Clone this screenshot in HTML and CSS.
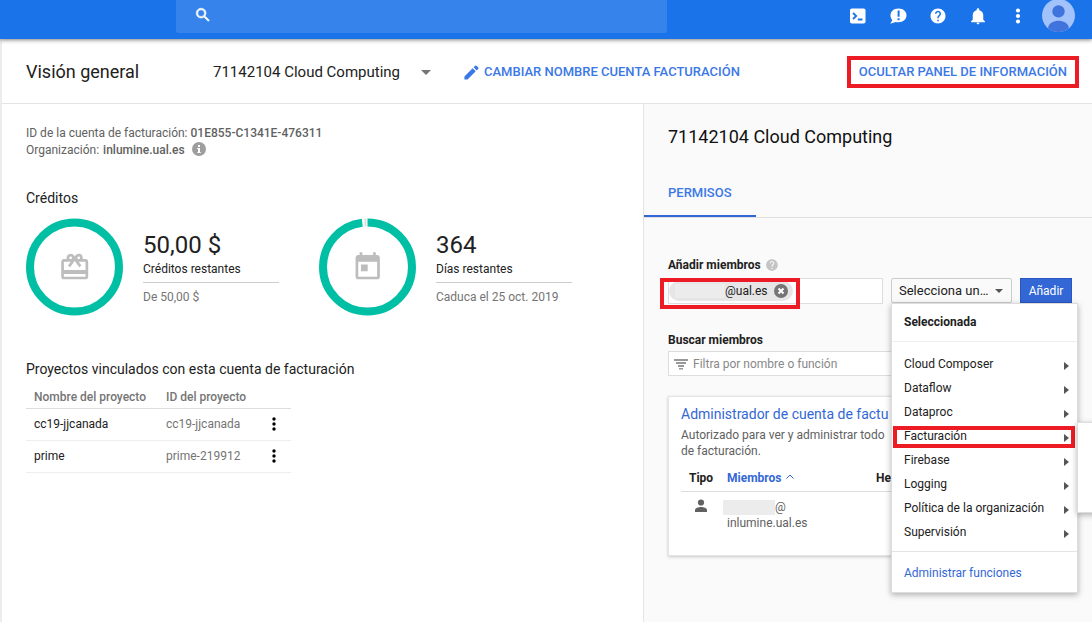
FILE: index.html
```html
<!DOCTYPE html>
<html lang="es">
<head>
<meta charset="utf-8">
<meta name="viewport" content="width=device-width, initial-scale=1">
<title>Visión general</title>
<link rel="stylesheet" href="styles.css">
</head>
<body>
<header class="topbar">
  <label class="search">
    <svg class="search-icon" viewBox="0 0 24 24" aria-hidden="true"><path d="M15.5 14h-.79l-.28-.27A6.5 6.5 0 1 0 13.73 14.43l.27.28v.79l5 4.99L20.49 19zM9.5 14a4.5 4.5 0 1 1 0-9 4.5 4.5 0 0 1 0 9z" stroke="#fff" stroke-width=".8"/></svg>
    <input class="search-input" type="search" aria-label="Buscar">
  </label>
  <nav class="tools">
    <button class="tool" aria-label="Cloud Shell"><svg viewBox="0 0 18 18"><rect x="1" y="1.500" width="15.500" height="15" rx="1.800" fill="#fff"/><path d="M4 6l3.200 3L4 12M8.800 12.500h4.700" fill="none" stroke="#1a73e8" stroke-width="1.800"/></svg></button>
    <button class="tool" aria-label="Comentarios"><svg viewBox="0 0 18 18"><path d="M9.500 1.500C4.800 1.500 1.500 4.400 1.500 8.300c0 2 .7 3.700 1.900 4.900L1.200 16.800l5.600-1.900c.9.300 1.700.4 2.700.4 4.700 0 8-3 8-7s-3.300-6.800-8-6.800z" fill="#fff"/><path d="M8.600 3.500h2v6.200h-2zM8.600 11.200h2v2.100h-2z" fill="#1a73e8"/></svg></button>
    <button class="tool" aria-label="Ayuda"><svg viewBox="0 0 24 24"><path fill="#fff" d="M12 2C6.480 2 2 6.480 2 12s4.480 10 10 10 10-4.480 10-10S17.520 2 12 2zm1 17h-2v-2h2v2zm2.070-7.750l-.9.920C13.450 12.900 13 13.500 13 15h-2v-.5c0-1.100.45-2.100 1.170-2.830l1.240-1.260c.37-.36.59-.86.59-1.410 0-1.100-.9-2-2-2s-2 .9-2 2H8c0-2.210 1.790-4 4-4s4 1.790 4 4c0 .88-.36 1.680-.93 2.250z"/></svg></button>
    <button class="tool" aria-label="Notificaciones"><svg viewBox="0 0 24 24"><path fill="#fff" d="M12 23c1.100 0 2-.9 2-2h-4c0 1.100.9 2 2 2zm7-6v-6c0-3.300-1.900-6-5.200-6.700V3.500a1.800 1.800 0 0 0-3.600 0v.8C6.900 5 5 7.700 5 11v6l-2.200 2v1.200h18.400V19z"/></svg></button>
    <button class="tool" aria-label="Más opciones"><svg viewBox="0 0 18 18" fill="#fff"><circle cx="9" cy="3.500" r="2.100"/><circle cx="9" cy="9" r="2.100"/><circle cx="9" cy="14.500" r="2.100"/></svg></button>
    <button class="avatar" aria-label="Cuenta"><svg viewBox="0 0 32 32"><defs><clipPath id="round"><circle cx="16" cy="16" r="16"/></clipPath></defs><g clip-path="url(#round)"><rect width="32" height="32" fill="#a1c2fa"/><circle cx="16" cy="12" r="6" fill="#4173dc"/><path d="M6 32v-4c0-5 6-7 10-7s10 2 10 7v4z" fill="#4173dc"/></g></svg></button>
  </nav>
</header>

<div class="page">
  <div class="titlebar">
    <h1 class="page-title">Visión general</h1>
    <span class="picker account">
      <select class="account-select" aria-label="Cuenta de facturación"><option>71142104 Cloud Computing</option></select>
      <svg class="caret" viewBox="0 0 10 5" aria-hidden="true"><path d="M0 0h10L5 5z"/></svg>
    </span>
    <button class="link-button">
      <svg class="pencil" viewBox="0 0 18 18" aria-hidden="true"><path d="M1.500 13.200v3.300h3.300l8.700-8.700-3.300-3.300zM16.200 5.100c.4-.4.4-.9 0-1.300l-2-2c-.4-.4-.9-.4-1.300 0l-1.700 1.700 3.300 3.300z"/></svg>
      CAMBIAR NOMBRE CUENTA FACTURACIÓN
    </button>
    <button class="link-button panel-toggle">OCULTAR PANEL DE INFORMACIÓN</button>
  </div>

  <div class="columns">
    <main class="overview">
      <div class="meta">
        <p>ID de la cuenta de facturación: <b>01E855-C1341E-476311</b></p>
        <p class="meta-org">Organización: <b>inlumine.ual.es</b>
          <svg class="info" viewBox="0 0 14 14" aria-label="Información"><circle cx="7" cy="7" r="7" fill="#9e9e9e"/><path d="M6 3h2v2H6zM5.200 6H8v4h.8v1H5.200v-1H6V7h-.8z" fill="#fff"/></svg>
        </p>
      </div>

      <section class="credits">
        <h2>Créditos</h2>
        <div class="gauges">
          <div class="gauge">
            <svg class="dial" viewBox="0 0 98 98" aria-hidden="true">
              <circle cx="48.500" cy="49" r="44.500" fill="none" stroke="#00bfa5" stroke-width="8"/>
              <g transform="translate(32.500 33) scale(1.350)" fill="#bdbdbd"><path d="M20 6h-2.180c.11-.31.180-.65.180-1a2.996 2.996 0 0 0-5.500-1.650l-.5.670-.5-.68C10.960 2.540 10.050 2 9 2 7.340 2 6 3.340 6 5c0 .35.070.69.180 1H4c-1.110 0-1.990.89-1.990 2L2 19c0 1.110.89 2 2 2h16c1.110 0 2-.89 2-2V8c0-1.110-.89-2-2-2zm-5-2c.55 0 1 .45 1 1s-.45 1-1 1-1-.45-1-1 .45-1 1-1zM9 4c.55 0 1 .45 1 1s-.45 1-1 1-1-.45-1-1 .45-1 1-1zm11 15H4v-2h16v2zm0-5H4V8h5.080L7 10.830 8.620 12 11 8.760l1-1.360 1 1.360L15.380 12 17 10.830 14.920 8H20v6z"/></g>
            </svg>
            <div class="figures">
              <p class="figure">50,00 $</p>
              <p class="figure-name">Créditos restantes</p>
              <p class="figure-note">De 50,00 $</p>
            </div>
          </div>
          <div class="gauge">
            <svg class="dial" viewBox="0 0 98 98" aria-hidden="true">
              <circle cx="48.500" cy="49" r="44.500" fill="none" stroke="#00bfa5" stroke-width="8" pathLength="100" stroke-dasharray="98.100 1.900" transform="rotate(-90 48.500 49)"/>
              <path d="M45.200 .6h2l.2 8h-1.700z" fill="#ddd"/>
              <g transform="translate(32.500 33) scale(1.350)" fill="#bdbdbd"><path d="M19 3h-1V1h-2v2H8V1H6v2H5c-1.110 0-1.990.9-1.990 2L3 19c0 1.100.89 2 2 2h14c1.100 0 2-.9 2-2V5c0-1.100-.9-2-2-2zm0 16H5V8h14v11zM7 10h5v5H7z"/></g>
            </svg>
            <div class="figures">
              <p class="figure">364</p>
              <p class="figure-name">Días restantes</p>
              <p class="figure-note">Caduca el 25 oct. 2019</p>
            </div>
          </div>
        </div>
      </section>

      <section class="projects">
        <h2>Proyectos vinculados con esta cuenta de facturación</h2>
        <table class="project-table">
          <thead><tr><th class="col-name">Nombre del proyecto</th><th class="col-id">ID del proyecto</th><th class="col-menu"></th></tr></thead>
          <tbody>
            <tr><td>cc19-jjcanada</td><td class="muted">cc19-jjcanada</td><td><button class="more" aria-label="Opciones de cc19-jjcanada"><svg viewBox="0 0 4 14"><circle cx="2" cy="2" r="1.700"/><circle cx="2" cy="7" r="1.700"/><circle cx="2" cy="12" r="1.700"/></svg></button></td></tr>
            <tr><td>prime</td><td class="muted">prime-219912</td><td><button class="more" aria-label="Opciones de prime"><svg viewBox="0 0 4 14"><circle cx="2" cy="2" r="1.700"/><circle cx="2" cy="7" r="1.700"/><circle cx="2" cy="12" r="1.700"/></svg></button></td></tr>
          </tbody>
        </table>
      </section>
    </main>

    <aside class="panel">
      <h2 class="panel-title">71142104 Cloud Computing</h2>
      <div class="tabs"><button class="tab">PERMISOS</button></div>

      <div class="panel-body">
        <label class="field-label" for="members">Añadir miembros
          <svg class="help" viewBox="0 0 24 24" aria-hidden="true"><path d="M12 2C6.480 2 2 6.480 2 12s4.480 10 10 10 10-4.480 10-10S17.520 2 12 2zm1 17h-2v-2h2v2zm2.070-7.750l-.9.920C13.450 12.900 13 13.500 13 15h-2v-.5c0-1.100.45-2.100 1.170-2.830l1.240-1.260c.37-.36.59-.86.59-1.410 0-1.100-.9-2-2-2s-2 .9-2 2H8c0-2.210 1.790-4 4-4s4 1.790 4 4c0 .88-.36 1.680-.93 2.250z"/></svg>
        </label>
        <div class="add-row">
          <div class="member-box">
            <span class="chip"><span class="redacted chip-name"></span><span>@ual.es</span>
              <button class="chip-remove" aria-label="Quitar"><svg viewBox="0 0 14 14"><circle cx="7" cy="7" r="7" fill="#757575"/><path d="M4.500 4.500l5 5m0-5l-5 5" stroke="#fff" stroke-width="2"/></svg></button>
            </span>
            <input class="member-input" id="members" type="text">
            <span class="member-mark"></span>
          </div>
          <div class="role">
            <span class="picker role-picker">
              <select class="role-select" aria-label="Función"><option>Selecciona un…</option></select>
              <svg class="role-caret" viewBox="0 0 8 4" aria-hidden="true"><path d="M0 0h8L4 4z"/></svg>
            </span>
            <div class="menu">
              <p class="menu-heading">Seleccionada</p>
              <div class="menu-list">
                <button class="menu-item">Cloud Composer<svg viewBox="0 0 5 8"><path d="M0 0l5 4-5 4z"/></svg></button>
                <button class="menu-item">Dataflow<svg viewBox="0 0 5 8"><path d="M0 0l5 4-5 4z"/></svg></button>
                <button class="menu-item">Dataproc<svg viewBox="0 0 5 8"><path d="M0 0l5 4-5 4z"/></svg></button>
                <button class="menu-item marked">Facturación<svg viewBox="0 0 5 8"><path d="M0 0l5 4-5 4z"/></svg></button>
                <button class="menu-item">Firebase<svg viewBox="0 0 5 8"><path d="M0 0l5 4-5 4z"/></svg></button>
                <button class="menu-item">Logging<svg viewBox="0 0 5 8"><path d="M0 0l5 4-5 4z"/></svg></button>
                <button class="menu-item">Política de la organización<svg viewBox="0 0 5 8"><path d="M0 0l5 4-5 4z"/></svg></button>
                <button class="menu-item">Supervisión<svg viewBox="0 0 5 8"><path d="M0 0l5 4-5 4z"/></svg></button>
              </div>
              <a class="menu-link" href="#">Administrar funciones</a>
              <div class="submenu"></div>
            </div>
          </div>
          <button class="add-button">Añadir</button>
        </div>

        <label class="field-label search-label" for="filter">Buscar miembros</label>
        <div class="filter">
          <svg class="filter-icon" viewBox="0 0 16 12" aria-hidden="true"><path d="M1 1h14v2H1zM3 4h10v2H3zM5 7h6v2H5zM6 10h4v1.500H6z"/></svg>
          <input class="filter-input" id="filter" type="text" placeholder="Filtra por nombre o función">
        </div>

        <article class="card">
          <h3 class="card-title">Administrador de cuenta de factu</h3>
          <p class="card-text">Autorizado para ver y administrar todo<br>de facturación.</p>
          <table class="member-table">
            <thead><tr><th class="col-type">Tipo</th><th class="sorted">Miembros <svg class="sort" viewBox="0 0 8 5" aria-hidden="true"><path d="M.5 4.500L4 1l3.500 3.500" fill="none" stroke="#3367d6"/></svg></th><th class="col-inherited">Her</th></tr></thead>
            <tbody><tr>
              <td class="person"><svg viewBox="0 0 14 14"><circle cx="7" cy="3.500" r="3.100"/><path d="M1 13v-2c0-2 3.500-3 6-3s6 1 6 3v2z"/></svg></td>
              <td class="member"><span class="redacted member-name"></span>@<br>inlumine.ual.es</td>
              <td></td>
            </tr></tbody>
          </table>
        </article>
      </div>
    </aside>
  </div>
</div>
</body>
</html>
```
FILE: styles.css
```css
* { box-sizing: border-box; }

body {
  display: flex;
  flex-direction: column;
  min-height: 100vh;
  margin: 0;
  overflow: hidden;
  background: #fff;
  color: #212121;
  font-family: Roboto, "Liberation Sans", sans-serif;
  font-size: 12px;
  line-height: 16px;
}

h1, h2, h3, p { margin: 0; font-weight: 400; }
b { font-weight: 500; }
svg { display: block; flex: none; }

button, input, select {
  margin: 0;
  padding: 0;
  border: 0;
  background: none;
  color: inherit;
  font: inherit;
  outline: 0;
}

select { appearance: none; }

/* Top bar */
.topbar {
  display: flex;
  justify-content: space-between;
  height: 39px;
  padding: 0 17px 0 176px;
  background: #1a73e8;
  box-shadow: 0 1px 4px rgba(0, 0, 0, .5);
  z-index: 2;
}

.search {
  display: flex;
  flex: 0 1 491px;
  align-items: center;
  height: 33px;
  padding: 0 18px 4px;
  border-radius: 0 0 2px 2px;
  background: #3583eb;
}

.search-icon { width: 18px; height: 18px; fill: #fff; }
.search-input { flex: 1; min-width: 0; color: #fff; }

.tools {
  display: flex;
  align-items: center;
  gap: 22px;
  height: 31px;
}

.tool svg { width: 18px; height: 18px; }
.avatar svg { width: 33px; height: 33px; }
.avatar { margin-left: -7px; }

/* Title bar */
.page {
  display: flex;
  flex: 1;
  flex-direction: column;
  border-left: 2px solid #ececec;
}

.titlebar {
  display: flex;
  align-items: center;
  height: 65px;
  padding: 2px 13px 0 24px;
  border-bottom: 1px solid #e4e4e4;
}

.page-title { width: 187px; font-size: 18px; line-height: 24px; }

.picker { position: relative; display: flex; align-items: center; }
.account { gap: 20px; font-size: 15px; line-height: 24px; }
.caret { width: 10px; height: 5px; fill: #757575; }

.link-button {
  display: flex;
  align-items: center;
  gap: 4px;
  color: #3b78e7;
  font-size: 13px;
  font-weight: 500;
  line-height: 16px;
}

.account + .link-button { margin-left: 32px; }
.pencil { width: 17px; height: 17px; fill: #3b78e7; }

.panel-toggle {
  margin-left: auto;
  padding: 4px 8px;
  border: 4px solid #ed1c24;
}

/* Columns */
.columns {
  display: grid;
  flex: 1;
  grid-template-columns: minmax(0, 1fr) minmax(0, 449px);
}

.overview { padding: 21px 24px; }
.overview h2 { font-size: 14px; line-height: 20px; }

.meta { color: #616161; line-height: 17px; }
.meta-org { display: flex; gap: 4px; }
.info { width: 14px; height: 14px; margin-left: 3px; }

.credits { margin-top: 29px; }
.gauges { display: flex; gap: 40px; margin-top: 10px; }
.gauge { display: flex; gap: 19px; }
.dial { width: 98px; height: 98px; }
.figures { width: 136px; padding-top: 11px; }
.figure { font-size: 24px; line-height: 32px; }
.figure-name { padding-bottom: 5px; border-bottom: 1px solid #ccc; }
.figure-note { padding-top: 6px; color: #757575; }

.projects { margin-top: 43px; }

.project-table {
  width: 265px;
  border-collapse: collapse;
  table-layout: fixed;
}

.project-table th {
  height: 29px;
  padding: 8px 0 0 8px;
  border-bottom: 1px solid #ddd;
  color: #757575;
  font-size: 12px;
  font-weight: 500;
  text-align: left;
}

.project-table td { height: 32px; padding: 0 0 0 8px; border-bottom: 1px solid #eee; }
.project-table .muted { color: #757575; }
.col-name { width: 132px; }
.col-menu { width: 27px; }
.more { display: block; }
.more svg { width: 4px; height: 14px; }

/* Information panel */
.panel {
  position: relative;
  overflow: hidden;
  border-left: 1px solid #e4e4e4;
  background: #fafafa;
}

.panel-title { padding: 21px 24px 0; color: #111; font-size: 18px; line-height: 24px; }
.tabs { margin-top: 19px; border-bottom: 1px solid #e0e0e0; }

.tab {
  display: block;
  height: 49px;
  padding: 2px 24px 0;
  border-bottom: 2px solid #3367d6;
  color: #3b78e7;
  font-size: 13px;
  font-weight: 500;
}

.panel-body { padding: 39px 20px 0 24px; }

.field-label {
  display: flex;
  align-items: center;
  gap: 4px;
  font-weight: 700;
}

.help { width: 14px; height: 14px; fill: #c4c4c4; }
.add-row { display: flex; gap: 8px; height: 26px; margin-top: 5px; }

.member-box {
  position: relative;
  display: flex;
  flex: 1;
  min-width: 0;
  border: 1px solid #ddd;
  background: #fff;
}

.member-input { flex: 1; min-width: 0; }

.chip {
  display: flex;
  align-items: center;
  height: 20px;
  margin: 2px 0;
  padding: 0 5px 0 6px;
  border-radius: 10px;
  background: #e6e6e6;
}

.redacted { display: inline-block; background: #ececec; }
.chip-name { width: 50px; height: 14px; }
.chip-remove { margin-left: 6px; }
.chip-remove svg { width: 14px; height: 14px; }

.member-mark {
  position: absolute;
  top: -1px;
  left: -9px;
  width: 140px;
  height: 31px;
  border: 4px solid #ed1c24;
  pointer-events: none;
}

.role { position: relative; width: 121px; }

.role-select {
  width: 100%;
  height: 25px;
  padding-left: 7px;
  border: 1px solid #ccc;
  border-radius: 2px;
  background: #fafafa;
  font-size: 13px;
}

.role-caret { position: absolute; right: 9px; width: 8px; height: 4px; fill: #555; }

.add-button {
  width: 52px;
  height: 25px;
  border: 1px solid #2a56c6;
  background: #3367d6;
  color: #fff;
}

/* Role menu */
.menu {
  position: absolute;
  top: 25px;
  left: 0;
  z-index: 1;
  width: 187px;
  border: 1px solid #ddd;
  background: #fff;
  box-shadow: 0 2px 6px rgba(0, 0, 0, .3);
}

.menu-heading { padding: 10px 12px 11px; border-bottom: 1px solid #eee; font-weight: 700; }
.menu-list { padding: 10px 0 7px; }

.menu-item {
  display: flex;
  align-items: center;
  justify-content: space-between;
  width: 100%;
  height: 24px;
  padding: 0 8px 0 12px;
}

.menu-item svg { width: 5px; height: 8px; margin-top: 3px; fill: #555; }
.menu-item.marked { position: relative; }

.menu-item.marked::after {
  position: absolute;
  inset: 2px 2px 0 1px;
  border: 4px solid #ed1c24;
  content: "";
}

.menu-link {
  display: block;
  padding: 13px 12px 11px;
  border-top: 1px solid #e4e4e4;
  color: #3367d6;
  text-decoration: none;
}

.submenu {
  position: absolute;
  top: 118px;
  left: 100%;
  width: 120px;
  height: 91px;
  border: 1px solid #ddd;
  background: #fff;
  box-shadow: 0 2px 6px rgba(0, 0, 0, .3);
}

/* Member search and role card */
.search-label { margin-top: 28px; }

.filter {
  display: flex;
  align-items: center;
  gap: 4px;
  height: 25px;
  margin-top: 3px;
  padding-left: 4px;
  border: 1px solid #ddd;
  background: #fff;
}

.filter-icon { width: 16px; height: 12px; fill: #999; }
.filter-input { flex: 1; min-width: 0; }
.filter-input::placeholder { color: #888; opacity: 1; }

.card {
  height: 160px;
  margin-top: 20px;
  padding: 7px 12px;
  overflow: hidden;
  border: 1px solid #e4e4e4;
  background: #fff;
  box-shadow: 0 1px 3px rgba(0, 0, 0, .2);
}

.card-title { color: #3367d6; font-size: 14px; line-height: 20px; white-space: nowrap; }
.card-text { margin-top: 3px; color: #616161; }

.member-table { width: 100%; margin-top: 7px; border-collapse: collapse; table-layout: fixed; }

.member-table th {
  height: 25px;
  padding: 0 0 0 8px;
  border-bottom: 1px solid #ddd;
  color: #212121;
  font-weight: 700;
  text-align: left;
}

.member-table .sorted { color: #3367d6; }
.sort { display: inline-block; width: 8px; height: 5px; margin: 0 0 3px 2px; }
.member-table .col-type { width: 38px; }
.member-table .col-inherited { width: 183px; padding-left: 0; }
.member-table td { padding: 7px 0 0 8px; color: #616161; vertical-align: top; }
.person svg { width: 14px; height: 14px; margin-left: 5px; fill: #616161; }
.member-name { width: 52px; height: 15px; margin-left: -4px; vertical-align: middle; }
```
